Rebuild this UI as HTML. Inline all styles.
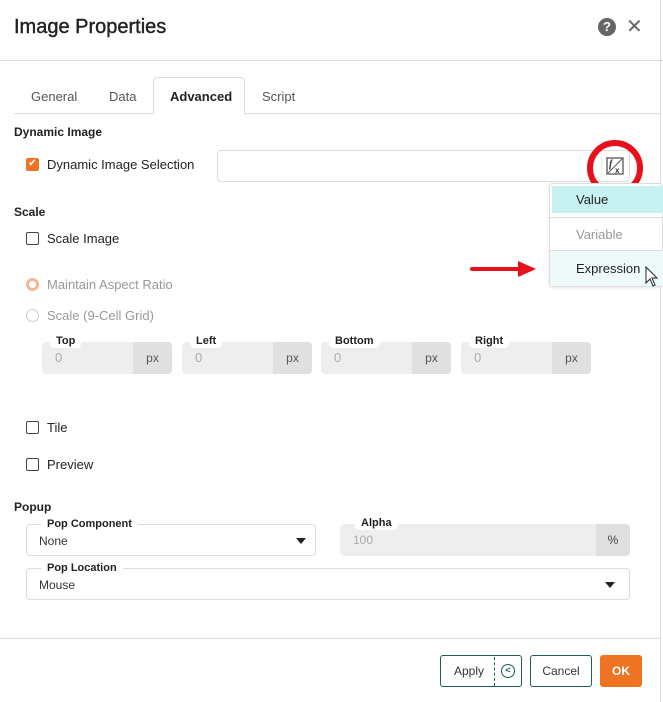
<!DOCTYPE html>
<html><head><style>
*{box-sizing:border-box;margin:0;padding:0}
body{width:663px;height:702px;background:#fff;font-family:"Liberation Sans",sans-serif;color:#222;position:relative;overflow:hidden;font-size:13px}
.a{position:absolute}
.b{font-weight:bold}
.cb{position:absolute;width:13px;height:13px;border:1.5px solid #444;border-radius:2px;background:#fff}
.rad{position:absolute;width:13px;height:13px;border:1px solid #ccc;border-radius:50%}
.num{position:absolute;top:342px;height:32px;width:130px;background:#eee;border-radius:4px}
.num .px{position:absolute;right:0;top:0;width:39px;height:32px;background:#e0e0e0;border-radius:0 4px 4px 0;color:#555;text-align:center;line-height:32px;font-size:12px}
.num .v{position:absolute;left:13px;top:8px;color:#aaa}
.num .l{position:absolute;left:8px;top:-8px;background:#fff;padding:0 6px;font-size:11px;font-weight:bold;border-radius:4px;line-height:14px}
.fs{position:absolute;border:1px solid #ddd;border-radius:4px;height:32px}
.fs .l{position:absolute;left:14px;top:-8px;background:#fff;padding:0 6px;font-size:11px;font-weight:bold;line-height:14px}
.fs .v{position:absolute;left:12px;top:9px;color:#333;font-size:12px}
.tri{position:absolute;width:0;height:0;border-left:5px solid transparent;border-right:5px solid transparent;border-top:6px solid #222}
.btn{position:absolute;top:655px;height:32px;border:1.5px solid #1e5e5a;border-radius:3px;color:#333;font-size:12px;line-height:30px;text-align:center}
</style></head><body>
<div class="a" style="left:14px;top:16px;font-size:20px;color:#222;-webkit-text-stroke:0.4px #222">Image Properties</div>
<div class="a" style="left:598px;top:18px;width:18px;height:18px;border-radius:50%;background:#666;color:#fff;font-weight:bold;font-size:13px;text-align:center;line-height:18px">?</div>
<div class="a" style="left:626px;top:14px;font-size:20px;color:#666">✕</div>
<div class="a" style="left:0;top:60px;width:663px;height:1px;background:#ddd"></div>
<div class="a" style="left:660px;top:0;width:1px;height:702px;background:#ddd"></div>

<div class="a" style="left:14px;top:113px;width:646px;height:1px;background:#ddd"></div>
<div class="a" style="left:153px;top:77px;width:92px;height:37px;border:1px solid #ddd;border-bottom:none;border-radius:4px 4px 0 0;background:#fff"></div>
<div class="a" style="left:31px;top:89px;color:#555">General</div>
<div class="a" style="left:109px;top:89px;color:#555">Data</div>
<div class="a b" style="left:170px;top:89px;color:#222">Advanced</div>
<div class="a" style="left:262px;top:89px;color:#555">Script</div>

<div class="a b" style="left:14px;top:125px;font-size:12px">Dynamic Image</div>
<div class="cb" style="left:26px;top:158px;background:#ee7424;border-color:#ee7424;color:#fff;font-size:10px;line-height:10px;text-align:center">✔</div>
<div class="a" style="left:47px;top:157px">Dynamic Image Selection</div>
<div class="a" style="left:217px;top:150px;width:413px;height:32px;border:1px solid #ddd;border-radius:4px"></div>
<div class="a" style="left:601px;top:151px;width:29px;height:30px;border-left:1px solid #eee"></div>
<svg class="a" style="left:606px;top:157px" width="18" height="18" viewBox="0 0 18 18"><rect x="1" y="1" width="16" height="16" fill="none" stroke="#555" stroke-width="1.3"/><line x1="2" y1="16" x2="16" y2="2" stroke="#555"/><text x="3" y="10" font-size="10" font-style="italic" font-weight="bold" font-family="Liberation Serif" fill="#333">f</text><text x="9" y="16" font-size="8" font-weight="bold" fill="#333">x</text></svg>
<div class="a" style="left:587px;top:140px;width:56px;height:56px;border:6px solid #e8101a;border-radius:50%"></div>

<div class="a" style="left:549px;top:183px;width:114px;height:104px;background:#fff;border:1px solid #ddd;border-radius:4px;box-shadow:0 1px 3px rgba(0,0,0,.1)"></div>
<div class="a" style="left:552px;top:186px;width:111px;height:27px;background:#c8f2f2"></div>
<div class="a" style="left:576px;top:192px">Value</div>
<div class="a" style="left:550px;top:217px;width:113px;height:1px;background:#ddd"></div>
<div class="a" style="left:576px;top:227px;color:#999">Variable</div>
<div class="a" style="left:550px;top:250px;width:113px;height:1px;background:#ddd"></div>
<div class="a" style="left:550px;top:251px;width:113px;height:35px;background:#eefafa"></div>
<div class="a" style="left:576px;top:261px">Expression</div>
<svg class="a" style="left:645px;top:266px" width="14" height="22" viewBox="0 0 14 22"><path d="M1 1 V17 L5 13 L8 20 L10 19 L7 12 L12 12 Z" fill="#fff" stroke="#222" stroke-width="1"/></svg>
<svg class="a" style="left:470px;top:259px" width="68" height="20" viewBox="0 0 68 20"><line x1="2" y1="10" x2="52" y2="10" stroke="#e8101a" stroke-width="4" stroke-linecap="round"/><path d="M48 2 L66 10 L48 18 Z" fill="#e8101a"/></svg>

<div class="a b" style="left:14px;top:205px;font-size:12px">Scale</div>
<div class="cb" style="left:26px;top:232px"></div>
<div class="a" style="left:47px;top:231px">Scale Image</div>
<div class="rad" style="left:26px;top:278px;border:3.5px solid #f3b896"></div>
<div class="a" style="left:47px;top:277px;color:#999">Maintain Aspect Ratio</div>
<div class="rad" style="left:26px;top:309px"></div>
<div class="a" style="left:47px;top:308px;color:#999">Scale (9-Cell Grid)</div>

<div class="num" style="left:42px"><span class="l">Top</span><span class="v">0</span><span class="px">px</span></div>
<div class="num" style="left:182px"><span class="l">Left</span><span class="v">0</span><span class="px">px</span></div>
<div class="num" style="left:321px"><span class="l">Bottom</span><span class="v">0</span><span class="px">px</span></div>
<div class="num" style="left:461px"><span class="l">Right</span><span class="v">0</span><span class="px">px</span></div>

<div class="cb" style="left:26px;top:421px"></div>
<div class="a" style="left:47px;top:420px">Tile</div>
<div class="cb" style="left:26px;top:458px"></div>
<div class="a" style="left:47px;top:457px">Preview</div>

<div class="a b" style="left:14px;top:500px;font-size:12px">Popup</div>
<div class="fs" style="left:26px;top:524px;width:290px"><span class="l">Pop Component</span><span class="v">None</span><span class="tri" style="right:9px;top:13px"></span></div>
<div class="a" style="left:340px;top:524px;width:290px;height:32px;background:#eee;border-radius:4px"></div>
<div class="a" style="left:596px;top:524px;width:34px;height:32px;background:#e0e0e0;border-radius:0 4px 4px 0;text-align:center;line-height:32px;font-size:12px;color:#444">%</div>
<div class="a b" style="left:355px;top:516px;background:#fff;padding:0 6px;font-size:11px;line-height:14px;border-radius:4px">Alpha</div>
<div class="a" style="left:353px;top:533px;color:#aaa;font-size:12px">100</div>
<div class="fs" style="left:26px;top:568px;width:604px"><span class="l">Pop Location</span><span class="v">Mouse</span><span class="tri" style="right:14px;top:13px"></span></div>

<div class="a" style="left:0;top:638px;width:660px;height:1px;background:#ddd"></div>
<div class="btn" style="left:440px;width:82px;text-align:left;padding-left:13px">Apply</div>
<div class="a" style="left:494px;top:657px;width:0;height:29px;border-left:1px dashed #1e5e5a"></div>
<div class="a" style="left:501px;top:664px;width:14px;height:14px;border:1.5px solid #1e5e5a;border-radius:50%;font-size:9px;line-height:11px;text-align:center;color:#1e5e5a;font-weight:bold">&lt;</div>
<div class="btn" style="left:530px;width:62px">Cancel</div>
<div class="a b" style="left:600px;top:655px;width:42px;height:32px;background:#ee7424;border-radius:3px;color:#fff;text-align:center;line-height:32px;font-size:12px">OK</div>
</body></html>
